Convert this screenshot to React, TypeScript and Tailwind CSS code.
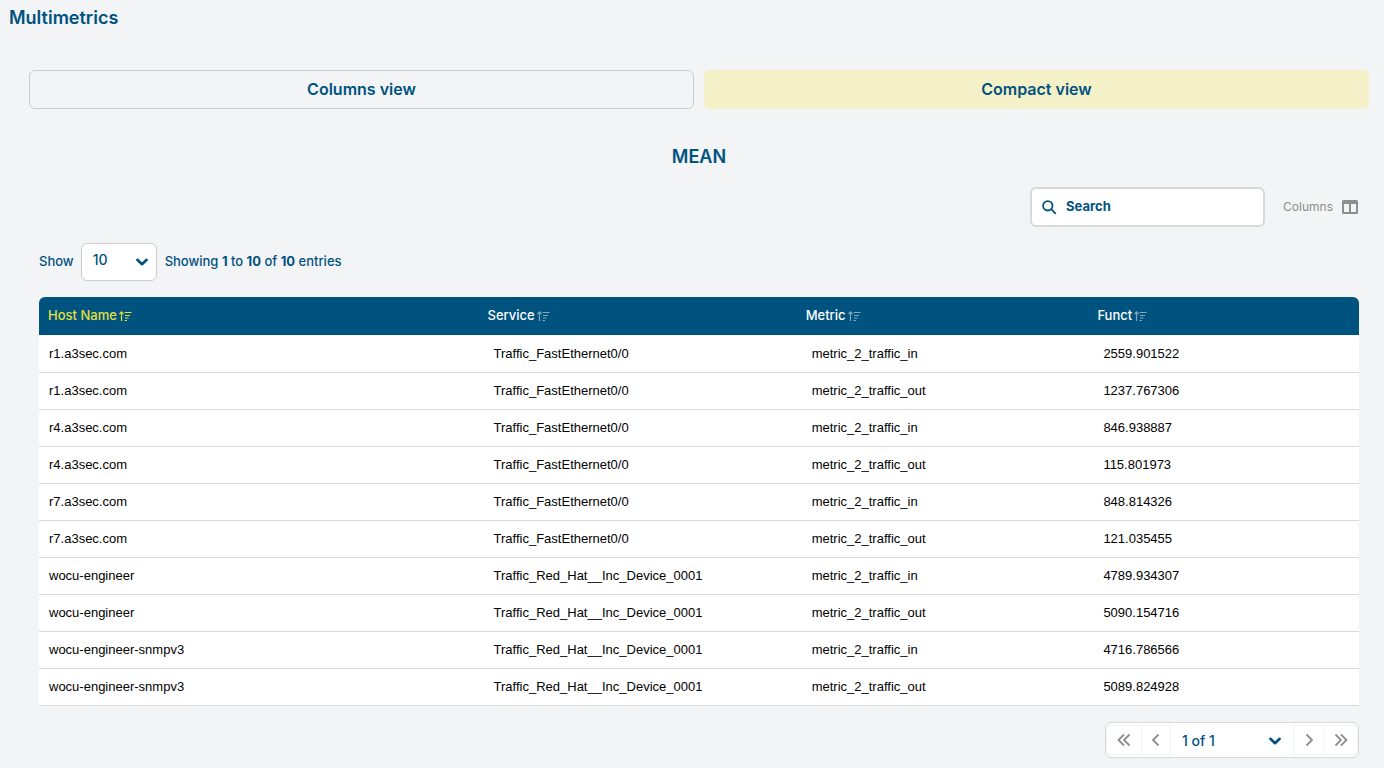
import { useState } from "react";

type Row = {
  host: string;
  service: string;
  metric: string;
  funct: string;
};

const FAST = "Traffic_FastEthernet0/0";
const RED_HAT = "Traffic_Red_Hat__Inc_Device_0001";

const rows: Row[] = [
  { host: "r1.a3sec.com", service: FAST, metric: "metric_2_traffic_in", funct: "2559.901522" },
  { host: "r1.a3sec.com", service: FAST, metric: "metric_2_traffic_out", funct: "1237.767306" },
  { host: "r4.a3sec.com", service: FAST, metric: "metric_2_traffic_in", funct: "846.938887" },
  { host: "r4.a3sec.com", service: FAST, metric: "metric_2_traffic_out", funct: "115.801973" },
  { host: "r7.a3sec.com", service: FAST, metric: "metric_2_traffic_in", funct: "848.814326" },
  { host: "r7.a3sec.com", service: FAST, metric: "metric_2_traffic_out", funct: "121.035455" },
  { host: "wocu-engineer", service: RED_HAT, metric: "metric_2_traffic_in", funct: "4789.934307" },
  { host: "wocu-engineer", service: RED_HAT, metric: "metric_2_traffic_out", funct: "5090.154716" },
  { host: "wocu-engineer-snmpv3", service: RED_HAT, metric: "metric_2_traffic_in", funct: "4716.786566" },
  { host: "wocu-engineer-snmpv3", service: RED_HAT, metric: "metric_2_traffic_out", funct: "5089.824928" },
];

const columns = [
  { label: "Host Name", width: "w-[33.3%]" },
  { label: "Service", width: "w-[24.1%]" },
  { label: "Metric", width: "w-[22.1%]" },
  { label: "Funct", width: "w-[20.5%]" },
];

const SortIcon = () => (
  <svg width="13" height="12" viewBox="0 0 13 12" fill="none" stroke="currentColor" aria-hidden="true">
    <path d="M2.5 11V2M0.4 4.2 2.5 1.8 4.6 4.2" strokeWidth="1.2" />
    <path d="M5.5 2.5h7M6 5.5h5M6 8h3.5M5.5 10.5h2.5" strokeWidth="1.2" />
  </svg>
);

const ChevronDown = ({ className }: { className: string }) => (
  <svg
    className={`pointer-events-none absolute ${className}`}
    width="12"
    height="8"
    viewBox="0 0 12 8"
    fill="none"
    stroke="currentColor"
    strokeWidth="2.6"
    strokeLinecap="round"
    strokeLinejoin="round"
    aria-hidden="true"
  >
    <path d="m1.4 1.8 4.6 4.4 4.6-4.4" />
  </svg>
);

const PageIcon = ({ d }: { d: string }) => (
  <svg width="14" height="14" viewBox="0 0 14 14" fill="none" stroke="currentColor" strokeWidth="1.8" aria-hidden="true">
    <path d={d} />
  </svg>
);

const App = () => {
  const [view, setView] = useState("compact");
  const tab = "h-[39px] flex-1 rounded-md border pb-0.5 text-base font-semibold";
  const active = "border-[#f4f1c8] bg-[#f4f1c8]";
  const idle = "border-[#cccccc]";

  return (
    <div className="min-h-screen bg-[#f2f4f6] font-['Inter',sans-serif] text-[#00527f]">
      <h1 className="px-[9px] pt-1.5 text-lg leading-6 font-semibold">Multimetrics</h1>

      {/* View switch */}
      <div className="mt-10 mr-[15px] ml-[29px] flex gap-2.5">
        <button className={`${tab} ${view === "columns" ? active : idle}`} onClick={() => setView("columns")}>
          Columns view
        </button>
        <button className={`${tab} ${view === "compact" ? active : idle}`} onClick={() => setView("compact")}>
          Compact view
        </button>
      </div>

      <h2 className="mt-9 mr-[15px] ml-[29px] text-center text-lg leading-6 font-semibold">MEAN</h2>

      <main className="mr-[25px] ml-[39px]">
        {/* Search and column picker */}
        <div className="mt-[18px] flex items-center justify-end">
          <label className="flex h-10 w-[235px] items-center rounded-md border-2 border-[#d9d9d9] bg-white pl-2.5">
            <svg width="15" height="15" viewBox="0 0 15 15" fill="none" stroke="currentColor" strokeWidth="1.8" aria-hidden="true">
              <circle cx="5.8" cy="5.8" r="4.7" />
              <path d="m9.2 9.2 4.6 4.6" />
            </svg>
            <input
              type="text"
              aria-label="Search"
              placeholder="Search"
              className="ml-[9px] w-40 text-[13px] font-bold outline-none placeholder:text-[#00527f]"
            />
          </label>
          <button className="ml-[18px] flex items-center gap-2 pr-px text-xs text-[#8e8e8e]">
            Columns
            <svg className="ml-px" width="16" height="14" viewBox="0 0 16 14" fill="currentColor" fillRule="evenodd" aria-hidden="true">
              <path d="M1.5 0h13A1.5 1.5 0 0 1 16 1.5v11a1.5 1.5 0 0 1-1.5 1.5h-13A1.5 1.5 0 0 1 0 12.5v-11A1.5 1.5 0 0 1 1.5 0ZM2 4v8h5V4ZM9 4v8h5V4Z" />
            </svg>
          </button>
        </div>

        {/* Page size */}
        <div className="mt-4 flex items-center text-[13px] font-medium">
          <label htmlFor="page-size">Show</label>
          <div className="relative ml-[7px]">
            <select
              id="page-size"
              className="block h-[38px] w-[76px] appearance-none rounded-md border border-[#cccccc] bg-white pb-1 pl-[11px] text-sm font-medium"
            >
              <option>10</option>
              <option>25</option>
              <option>50</option>
            </select>
            <ChevronDown className="top-[15px] right-[9px]" />
          </div>
          <p className="ml-2">
            Showing <b className="font-bold">1</b> to <b className="font-bold">10</b> of{" "}
            <b className="font-bold">10</b> entries
          </p>
        </div>

        <table className="mt-4 w-full table-fixed border-separate border-spacing-0 text-left">
          <thead>
            <tr>
              {columns.map((col, i) => (
                <th
                  key={col.label}
                  className={`${col.width} h-[38px] bg-[#00527f] pl-[9px] first:rounded-tl-md last:rounded-tr-md ${
                    i === 0 ? "text-[#e2e03f]" : "text-white"
                  }`}
                >
                  <button className="flex items-center gap-0.5 text-[13px] font-medium">
                    {col.label}
                    <span className={i === 0 ? "" : "opacity-50"}>
                      <SortIcon />
                    </span>
                  </button>
                </th>
              ))}
            </tr>
          </thead>
          <tbody className="font-['Liberation_Sans',Arial,sans-serif] text-[13px] text-black">
            {rows.map((row) => (
              <tr key={row.host + row.metric} className="group">
                {[row.host, row.service, row.metric, row.funct].map((cell, i) => (
                  <td
                    key={i}
                    className="h-[37px] border-b border-[#d9d9d9] bg-white pl-[15px] group-first:h-[38px] first:pl-2.5"
                  >
                    {cell}
                  </td>
                ))}
              </tr>
            ))}
          </tbody>
        </table>

        {/* Pagination */}
        <nav className="mt-4 flex justify-end" aria-label="Pagination">
          <div className="flex h-9 w-[254px] items-center rounded-md border border-[#d5d7d9] bg-white text-[#8e8e8e]">
            <button
              aria-label="First page"
              className="flex h-[30px] w-9 items-center justify-center rounded-l-md border border-[#f2f4f6]"
            >
              <PageIcon d="M7 1.5 1.5 7 7 12.5M12.5 1.5 7 7l5.5 5.5" />
            </button>
            <button
              aria-label="Previous page"
              className="flex h-[30px] w-[29px] items-center justify-center border border-l-0 border-[#f2f4f6]"
            >
              <PageIcon d="M9.5 1.5 4 7l5.5 5.5" />
            </button>
            <div className="relative flex-1 text-[#00527f]">
              <select aria-label="Page" className="block h-[34px] w-full appearance-none pt-0.5 pl-[11px] text-sm font-medium">
                <option>1 of 1</option>
              </select>
              <ChevronDown className="top-3.5 right-3" />
            </div>
            <button
              aria-label="Next page"
              className="flex h-[30px] w-[30px] items-center justify-center border border-r-0 border-[#f2f4f6]"
            >
              <PageIcon d="M4.5 1.5 10 7l-5.5 5.5" />
            </button>
            <button
              aria-label="Last page"
              className="flex h-[30px] w-[35px] items-center justify-center rounded-r-md border border-[#f2f4f6]"
            >
              <PageIcon d="M1.5 1.5 7 7l-5.5 5.5M7 1.5 12.5 7 7 12.5" />
            </button>
          </div>
        </nav>
      </main>
    </div>
  );
};

export default App;
